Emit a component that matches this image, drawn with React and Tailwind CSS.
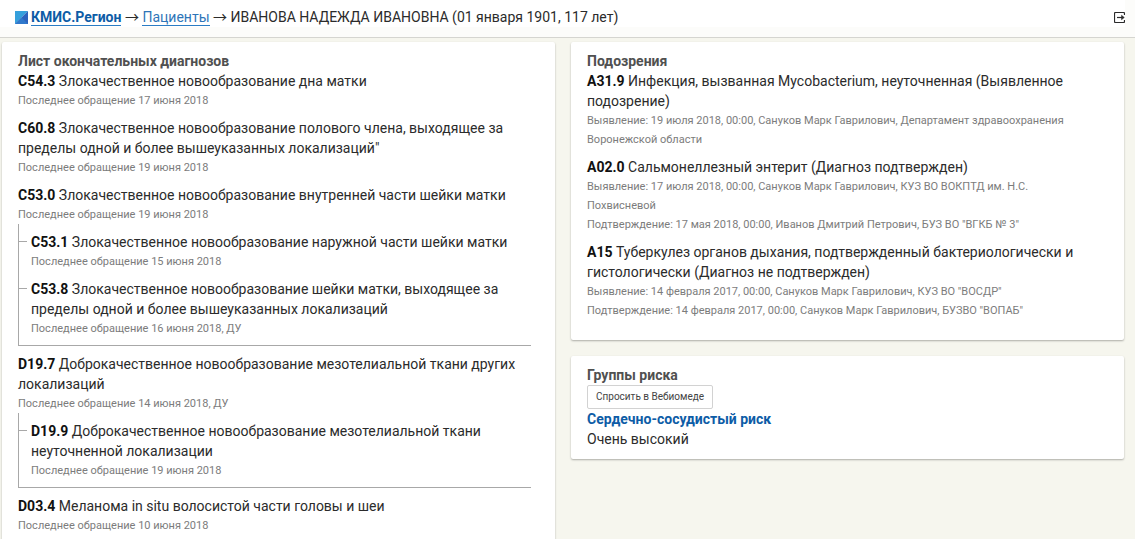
const diagnoses = [
  { code: 'C54.3', name: 'Злокачественное новообразование дна матки', notes: ['Последнее обращение 17 июня 2018'] },
  {
    code: 'C60.8',
    name: 'Злокачественное новообразование полового члена, выходящее за пределы одной и более вышеуказанных локализаций"',
    notes: ['Последнее обращение 19 июня 2018'],
  },
  {
    code: 'C53.0',
    name: 'Злокачественное новообразование внутренней части шейки матки',
    notes: ['Последнее обращение 19 июня 2018'],
    children: [
      {
        code: 'C53.1',
        name: 'Злокачественное новообразование наружной части шейки матки',
        notes: ['Последнее обращение 15 июня 2018'],
      },
      {
        code: 'C53.8',
        name: 'Злокачественное новообразование шейки матки, выходящее за пределы одной и более вышеуказанных локализаций',
        notes: ['Последнее обращение 16 июня 2018, ДУ'],
      },
    ],
  },
  {
    code: 'D19.7',
    name: 'Доброкачественное новообразование мезотелиальной ткани других локализаций',
    notes: ['Последнее обращение 14 июня 2018, ДУ'],
    children: [
      {
        code: 'D19.9',
        name: 'Доброкачественное новообразование мезотелиальной ткани неуточненной локализации',
        notes: ['Последнее обращение 19 июня 2018'],
      },
    ],
  },
  { code: 'D03.4', name: 'Меланома in situ волосистой части головы и шеи', notes: ['Последнее обращение 10 июня 2018'] },
];

const suspicions = [
  {
    code: 'A31.9',
    name: 'Инфекция, вызванная Mycobacterium, неуточненная (Выявленное подозрение)',
    notes: ['Выявление: 19 июля 2018, 00:00, Сануков Марк Гаврилович, Департамент здравоохранения Воронежской области'],
  },
  {
    code: 'A02.0',
    name: 'Сальмонеллезный энтерит (Диагноз подтвержден)',
    notes: [
      'Выявление: 17 июля 2018, 00:00, Сануков Марк Гаврилович, КУЗ ВО ВОКПТД им. Н.С. Похвисневой',
      'Подтверждение: 17 мая 2018, 00:00, Иванов Дмитрий Петрович, БУЗ ВО "ВГКБ № 3"',
    ],
  },
  {
    code: 'A15',
    name: 'Туберкулез органов дыхания, подтвержденный бактериологически и гистологически (Диагноз не подтвержден)',
    notes: [
      'Выявление: 14 февраля 2017, 00:00, Сануков Марк Гаврилович, КУЗ ВО "ВОСДР"',
      'Подтверждение: 14 февраля 2017, 00:00, Сануков Марк Гаврилович, БУЗВО "ВОПАБ"',
    ],
  },
];

function Card({ title, children }) {
  return (
    <section className="rounded-xs bg-white px-4 pt-[9px] pb-[10px] shadow-[0_1px_2px_rgba(0,0,0,0.3)]">
      <h2 className="leading-[20px] font-bold text-[#505050]">{title}</h2>
      {children}
    </section>
  );
}

function Entry({ item }) {
  return (
    <>
      <p className="leading-[20px]">
        <b className="text-[#111]">{item.code}</b> {item.name}
      </p>
      {item.notes.map((note) => (
        <p key={note} className="text-[11px] leading-[19px] text-[#7c7c7c]">{note}</p>
      ))}
    </>
  );
}

function Diagnosis({ item }) {
  return (
    <li>
      <Entry item={item} />
      {item.children && (
        // Refining diagnoses hang off the parent on a bracket line
        <ul className="mr-2 flex flex-col gap-2 border-b border-l border-[#a8a8a8] pt-2 pb-[7px]">
          {item.children.map((child) => (
            <li key={child.code} className="flex gap-1">
              <span className="mt-[9px] h-px w-2 shrink-0 bg-[#a8a8a8]" />
              <div>
                <Entry item={child} />
              </div>
            </li>
          ))}
        </ul>
      )}
    </li>
  );
}

function Arrow() {
  return <span className="font-['Noto_Sans_CJK_JP',sans-serif] leading-none">→</span>;
}

export default function App() {
  return (
    <div className="min-h-screen bg-[#f6f6ee] font-[Roboto,sans-serif] text-sm text-[#2b2b2b]">
      {/* Header */}
      <header className="border-b border-[#d5d5d0] bg-[#fcfcfa] pb-[10px]">
        <div className="mr-[10px] flex items-center justify-between bg-white pt-[7px] pl-[15px]">
          <nav className="flex items-center gap-[3px] leading-[20px]">
            <svg className="size-[13px]" viewBox="0 0 13 13" aria-hidden="true">
              <path d="M0 0H13L0 13Z" fill="#35a0dc" />
              <path d="M13 0V13H0Z" fill="#2b62bd" />
              <path d="M0 13L6.500 6.500L13 13Z" fill="#2f78cb" />
            </svg>
            <div>
              <a href="#home" className="border-b border-[#2a7cc4] font-bold text-[#0d5ca6]">КМИС.Регион</a>
              {' '}<Arrow />{' '}
              <a href="#patients" className="border-b border-[#2a7cc4] text-[#2e75b8]">Пациенты</a>
              {' '}<Arrow />{' ИВАНОВА НАДЕЖДА ИВАНОВНА (01 января 1901, 117 лет)'}
            </div>
          </nav>
          <button type="button" aria-label="Выйти">
            <svg className="size-[11px]" viewBox="0 0 11 11" fill="none" stroke="#2b2b2b" aria-hidden="true">
              <path d="M10.500 3V1.500Q10.500 .5 9.500 .5H1.500Q.5 .5 .5 1.500V9.500Q.5 10.500 1.500 10.500H9.500Q10.500 10.500 10.500 9.500V8" strokeWidth="1.200" />
              <path d="M3 5.500H8" strokeWidth="1.200" />
              <path d="M7.500 3.200L10.300 5.500L7.500 7.800Z" fill="#2b2b2b" strokeWidth=".5" />
            </svg>
          </button>
        </div>
      </header>

      <main className="grid grid-cols-2 gap-4 pt-1 pr-[11px] pl-[2px]">
        <Card title="Лист окончательных диагнозов">
          <ul className="flex flex-col gap-2 pb-[10px]">
            {diagnoses.map((item) => (
              <Diagnosis key={item.code} item={item} />
            ))}
          </ul>
        </Card>

        <div className="flex flex-col gap-4">
          <Card title="Подозрения">
            <ul className="flex flex-col gap-2 pr-4 pb-[10px]">
              {suspicions.map((item) => (
                <li key={item.code}>
                  <Entry item={item} />
                </li>
              ))}
            </ul>
          </Card>

          <Card title="Группы риска">
            <button
              type="button"
              className="block rounded-xs border border-[#d2d2d2] bg-white px-2 text-[10px] leading-[22px] text-[#444]"
            >
              Спросить в Вебиомеде
            </button>
            <p className="leading-[20px] font-bold text-[#0d5ca6]">Сердечно-сосудистый риск</p>
            <p className="leading-[20px]">Очень высокий</p>
          </Card>
        </div>
      </main>
    </div>
  );
}
